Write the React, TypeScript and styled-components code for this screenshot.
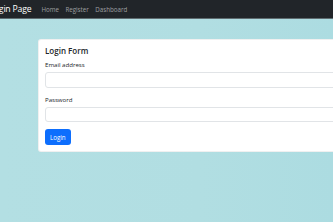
import styled, { createGlobalStyle } from "styled-components";

const GlobalStyle = createGlobalStyle`
  html, body {
    margin: 0;
    padding: 0;
    overflow: hidden;
  }
  body {
    font-family: "Open Sans", "Liberation Sans", sans-serif;
    background: linear-gradient(90deg, #b3dfe3 0%, #b1dee2 60%, #acdce1 100%);
    min-height: 222px;
  }
`;

const NavBar = styled.nav`
  display: flex;
  align-items: center;
  height: 18px;
  background-color: #212529;
  border-bottom: 1px solid #5f6c70;
  white-space: nowrap;
`;

const Brand = styled.span`
  margin-left: -10.5px;
  margin-right: 10px;
  color: #ffffff;
  font-size: 8.7px;
  letter-spacing: -0.2px;
  font-weight: 400;
`;

const NavLink = styled.a`
  color: rgba(255, 255, 255, 0.55);
  font-size: 6.2px;
  margin-right: 6.5px;
  text-decoration: none;
`;

const Main = styled.main`
  padding: 20px 0 0 38px;
`;

const Card = styled.div`
  width: 320px;
  background-color: #ffffff;
  border: 1px solid rgba(0, 0, 0, 0.06);
  border-radius: 3px;
  padding: 5px 6px 6px 6px;
  box-sizing: border-box;
`;

const Title = styled.h5`
  margin: 0 0 3px 0;
  font-size: 8px;
  line-height: 12px;
  font-weight: 600;
  color: #212529;
`;

const Field = styled.div`
  margin-bottom: 7px;
`;

const Label = styled.label`
  display: block;
  font-size: 6.1px;
  line-height: 9px;
  color: #212529;
  margin-bottom: 3px;
`;

const Input = styled.input`
  display: block;
  width: 100%;
  height: 15.5px;
  box-sizing: border-box;
  border: 1px solid #e1e4e7;
  border-radius: 3px;
  background: #ffffff;
  outline: none;
`;

const Button = styled.button`
  display: block;
  height: 16px;
  padding: 0 5px;
  background-color: #0d6efd;
  color: #ffffff;
  border: none;
  border-radius: 3px;
  font-family: inherit;
  font-size: 6.2px;
`;

export default function App() {
  return (
    <>
      <GlobalStyle />
      <NavBar>
        <Brand>Login Page</Brand>
        <NavLink href="#">Home</NavLink>
        <NavLink href="#">Register</NavLink>
        <NavLink href="#">Dashboard</NavLink>
      </NavBar>
      <Main>
        <Card>
          <Title>Login Form</Title>
          <Field>
            <Label>Email address</Label>
            <Input type="email" />
          </Field>
          <Field>
            <Label>Password</Label>
            <Input type="password" />
          </Field>
          <Button>Login</Button>
        </Card>
      </Main>
    </>
  );
}
